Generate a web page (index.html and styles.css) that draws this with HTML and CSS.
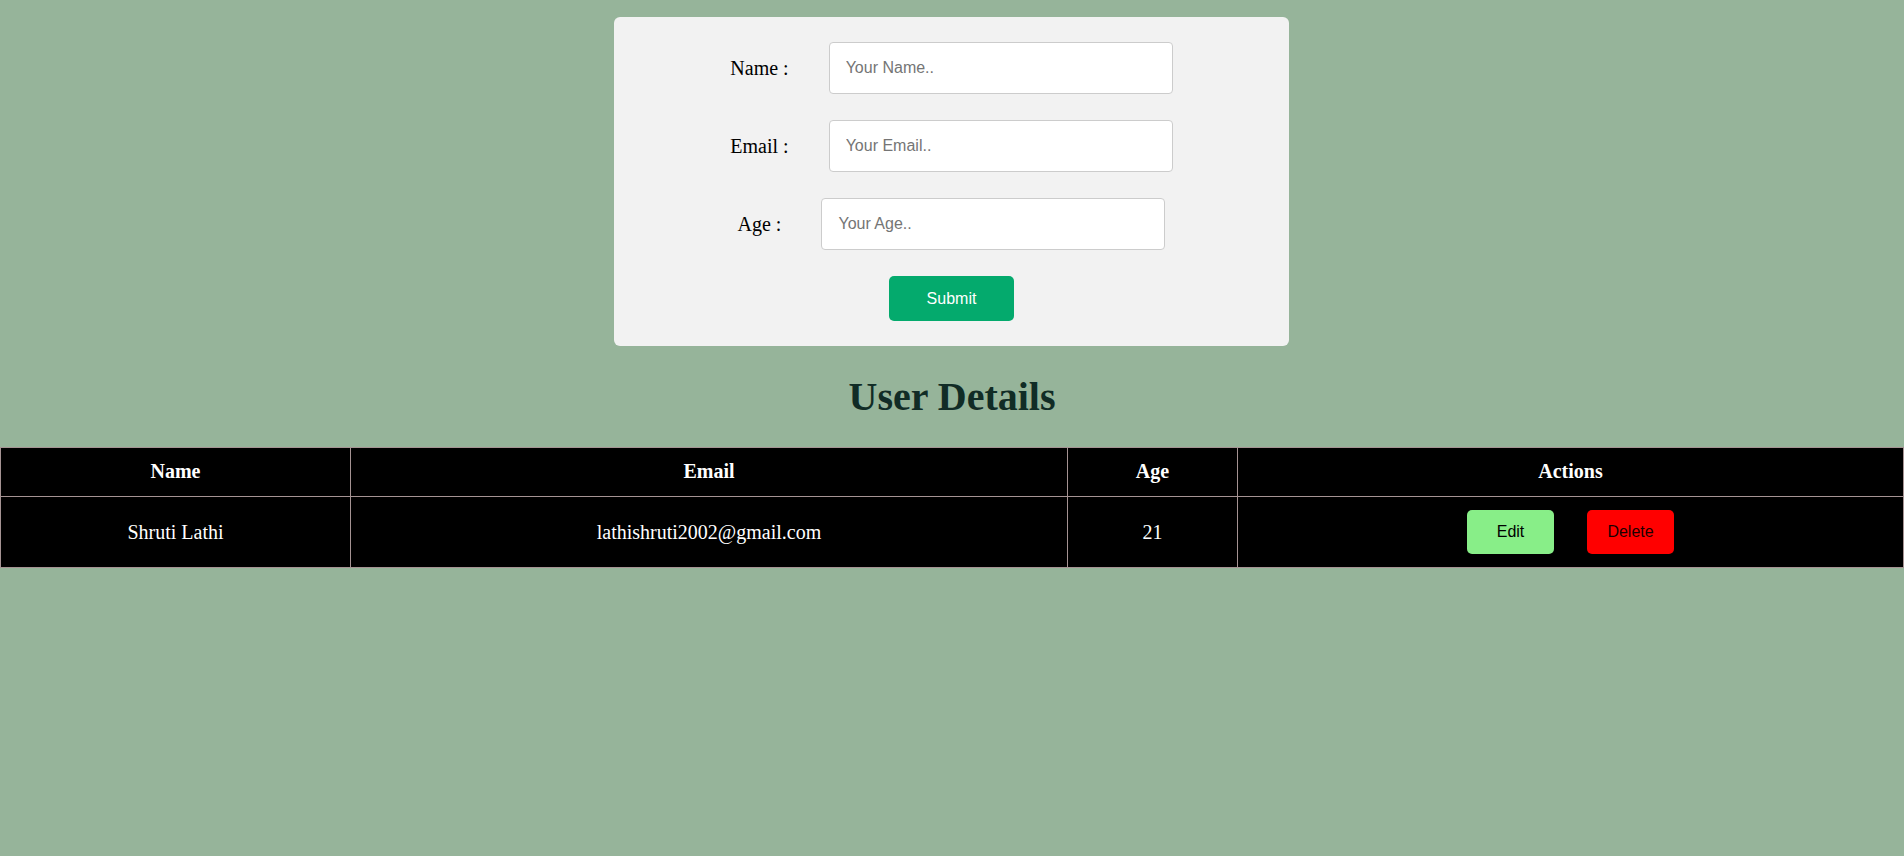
FILE: index.html
```html
<!DOCTYPE html>
<html lang="en">
<head>
<meta charset="utf-8">
<title>User Details</title>
<link rel="stylesheet" href="styles.css">
</head>
<body>
  <form class="card">
    <div class="row">
      <label class="label" for="name">Name :</label>
      <input class="field" id="name" type="text" placeholder="Your Name..">
    </div>
    <div class="row">
      <label class="label" for="email">Email :</label>
      <input class="field" id="email" type="text" placeholder="Your Email..">
    </div>
    <div class="row">
      <label class="label" for="age">Age :</label>
      <input class="field" id="age" type="text" placeholder="Your Age..">
    </div>
    <button class="submit" type="button">Submit</button>
  </form>

  <h1 class="title">User Details</h1>

  <table class="users">
    <colgroup>
      <col class="c-name">
      <col class="c-email">
      <col class="c-age">
      <col class="c-actions">
    </colgroup>
    <thead>
      <tr>
        <th>Name</th>
        <th>Email</th>
        <th>Age</th>
        <th>Actions</th>
      </tr>
    </thead>
    <tbody>
      <tr>
        <td>Shruti Lathi</td>
        <td>lathishruti2002@gmail.com</td>
        <td>21</td>
        <td class="actions">
          <button class="btn btn-edit" type="button">Edit</button>
          <button class="btn btn-delete" type="button">Delete</button>
        </td>
      </tr>
    </tbody>
  </table>
</body>
</html>
```
FILE: styles.css
```css
html, body {
  margin: 0;
  padding: 0;
}

body {
  background: #96b49a;
  font-family: "Liberation Serif", "Times New Roman", serif;
  min-height: 856px;
}

.card {
  width: 675px;
  margin: 17px 0 0 calc(50% - 338px);
  box-sizing: border-box;
  background: #f2f2f2;
  border-radius: 6px;
  padding: 25px 0;
  display: flex;
  flex-direction: column;
  align-items: center;
  gap: 26px;
}

.row {
  display: flex;
  align-items: center;
  gap: 40px;
}

.label {
  font-family: "Liberation Serif", "Times New Roman", serif;
  font-size: 20px;
  color: #000;
}

.field {
  box-sizing: border-box;
  width: 344px;
  height: 52px;
  padding: 0 16px;
  border: 1px solid #cccccc;
  border-radius: 4px;
  background: #fff;
  font-family: "Liberation Sans", Arial, sans-serif;
  font-size: 16px;
  color: #000;
}

.field::placeholder {
  color: #757575;
}

.submit {
  width: 125px;
  height: 45px;
  border: none;
  border-radius: 5px;
  background: #04aa6d;
  color: #fff;
  font-family: "Liberation Sans", Arial, sans-serif;
  font-size: 16px;
  cursor: pointer;
}

.title {
  margin: 27px 0;
  text-align: center;
  font-family: "Liberation Serif", "Times New Roman", serif;
  font-size: 40px;
  font-weight: bold;
  color: #112c26;
}

.users {
  width: 100%;
  table-layout: fixed;
  border-collapse: collapse;
  background: #000;
  color: #fff;
  font-family: "Liberation Serif", "Times New Roman", serif;
  font-size: 20px;
}

.c-name { width: 350px; }
.c-email { width: 717px; }
.c-age { width: 170px; }

.users th,
.users td {
  border: 1px solid #a59393;
  text-align: center;
}

.users th {
  font-weight: bold;
  padding: 12px 12px 13px;
}

.users td {
  padding: 13px 12px;
}

.btn {
  width: 87px;
  height: 44px;
  margin: 0 14px;
  border: none;
  border-radius: 5px;
  font-family: "Liberation Sans", Arial, sans-serif;
  font-size: 16px;
  color: #000;
  vertical-align: middle;
  cursor: pointer;
}

.btn-edit {
  background: #88ee88;
}

.btn-delete {
  background: #ff0000;
  color: #1a0000;
}
```
